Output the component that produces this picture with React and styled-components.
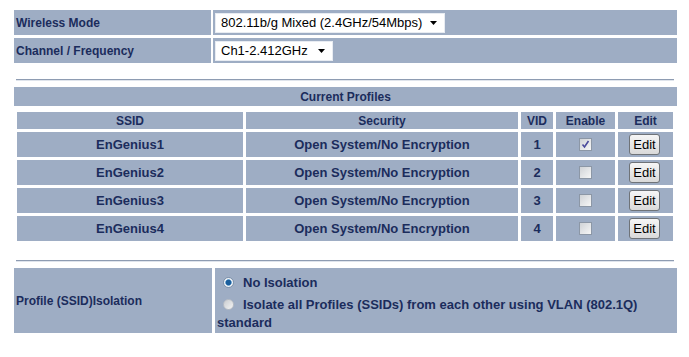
import React from 'react'
import styled, { createGlobalStyle } from 'styled-components'

const GlobalStyle = createGlobalStyle`
  body {
    margin: 0;
    background: #fff;
  }
`

const CELL = '#9eadc4'
const INK = '#1b2c5c'
const SANS = `"Liberation Sans", Arial, sans-serif`

const Page = styled.div`
  width: 663px;
  padding: 10px 0 0 14px;
`
const SettingsGrid = styled.div`
  display: grid;
  grid-template-columns: 197px 1fr;
  grid-auto-rows: 25px;
  gap: 3px 2px;
`
const Label = styled.div`
  background: ${CELL};
  color: ${INK};
  font: bold 12px ${SANS};
  display: flex;
  align-items: center;
  padding-left: 2px;
`
const Value = styled.div`
  background: ${CELL};
  display: flex;
  align-items: center;
  padding-left: 2px;
`
const Select = styled.div`
  width: ${p => p.$w}px;
  height: 20px;
  box-sizing: border-box;
  background: #fff;
  border: 1px solid #e8ecf2;
  display: flex;
  align-items: center;
  justify-content: space-between;
  padding: 0 7px 0 5px;
  font: 13px ${SANS};
  color: #000;
`
const Rule = styled.div`
  height: 1px;
  background: #8e9cb2;
  border-bottom: 1px solid #dfe4ec;
  margin: ${p => p.$top}px 3px 6px 2px;
`
const Band = styled.div`
  background: ${CELL};
  color: ${INK};
  height: 19px;
  display: flex;
  align-items: center;
  justify-content: center;
  font: bold 12px ${SANS};
`
const ProfileGrid = styled.div`
  display: grid;
  grid-template-columns: 226px 272px 32px 59px 55px;
  grid-template-rows: 17px;
  grid-auto-rows: 25px;
  gap: 3px;
  margin: 6px 0 0 3px;
`
const Head = styled.div`
  background: ${CELL};
  color: ${INK};
  font: bold 12px ${SANS};
  display: flex;
  align-items: center;
  justify-content: center;
`
const Cell = styled.div`
  background: ${CELL};
  color: ${INK};
  font: bold 13px ${SANS};
  display: flex;
  align-items: center;
  justify-content: center;
`
const Check = styled.span`
  width: 13px;
  height: 13px;
  box-sizing: border-box;
  border: 1px solid #8c97a6;
  background: linear-gradient(135deg, #d0d3d7, #f6f6f6);
  display: flex;
  align-items: center;
  justify-content: center;
`
const EditButton = styled.button`
  width: 31px;
  height: 21px;
  padding: 0;
  margin-left: -2px;
  border: 1px solid #6f7378;
  border-radius: 3px;
  background: linear-gradient(#f6f6f6, #d9d9d9);
  color: #000;
  font: 13px ${SANS};
`
const IsolationGrid = styled.div`
  display: grid;
  grid-template-columns: 198px 1fr;
  gap: 3px;
`
const IsoLabel = styled.div`
  background: ${CELL};
  color: ${INK};
  font: bold 12px ${SANS};
  display: flex;
  align-items: center;
  padding-left: 2px;
`
const IsoValue = styled.div`
  background: ${CELL};
  color: ${INK};
  font: bold 13px ${SANS};
  padding: 6px 2px 1px;
`
const Option = styled.div`
  line-height: 18px;
  & + & {
    margin-top: 4px;
  }
`
const Radio = styled.span`
  display: inline-block;
  width: 11px;
  height: 11px;
  box-sizing: border-box;
  border-radius: 50%;
  border: 1px solid ${p => (p.$on ? '#7f93ab' : '#b9bec6')};
  background: ${p =>
    p.$on
      ? 'radial-gradient(circle, #1a5e9c 0 2.5px, #6fa3cf 3px, #eef3f8 3.6px)'
      : 'linear-gradient(135deg, #c9ccd0, #f4f4f4)'};
  margin: 0 9px 0 6px;
  vertical-align: -1px;
`

const Arrow = () => (
  <svg width="7" height="4" viewBox="0 0 7 4">
    <path d="M0 0h7L3.5 4z" fill="#000" />
  </svg>
)

const Tick = () => (
  <svg width="9" height="9" viewBox="0 0 9 9">
    <path d="M1.5 4.5l2 2.5 4-6" fill="none" stroke="#4a4a9c" strokeWidth="1.6" />
  </svg>
)

const profiles = [
  { ssid: 'EnGenius1', vid: 1, on: true },
  { ssid: 'EnGenius2', vid: 2, on: false },
  { ssid: 'EnGenius3', vid: 3, on: false },
  { ssid: 'EnGenius4', vid: 4, on: false },
]

export default function App() {
  return (
    <Page>
      <GlobalStyle />
      <SettingsGrid>
        <Label>Wireless Mode</Label>
        <Value>
          <Select $w={230}>802.11b/g Mixed (2.4GHz/54Mbps)<Arrow /></Select>
        </Value>
        <Label>Channel / Frequency</Label>
        <Value>
          <Select $w={118}>Ch1-2.412GHz<Arrow /></Select>
        </Value>
      </SettingsGrid>

      <Rule $top={16} />

      <Band>Current Profiles</Band>
      <ProfileGrid>
        <Head>SSID</Head>
        <Head>Security</Head>
        <Head>VID</Head>
        <Head>Enable</Head>
        <Head>Edit</Head>
        {profiles.map(p => (
          <React.Fragment key={p.ssid}>
            <Cell>{p.ssid}</Cell>
            <Cell>Open System/No Encryption</Cell>
            <Cell>{p.vid}</Cell>
            <Cell><Check>{p.on && <Tick />}</Check></Cell>
            <Cell><EditButton>Edit</EditButton></Cell>
          </React.Fragment>
        ))}
      </ProfileGrid>

      <Rule $top={19} />

      <IsolationGrid>
        <IsoLabel>Profile (SSID)Isolation</IsoLabel>
        <IsoValue>
          <Option><Radio $on />No Isolation</Option>
          <Option>
            <Radio />Isolate all Profiles (SSIDs) from each other using VLAN (802.1Q) standard
          </Option>
        </IsoValue>
      </IsolationGrid>
    </Page>
  )
}
